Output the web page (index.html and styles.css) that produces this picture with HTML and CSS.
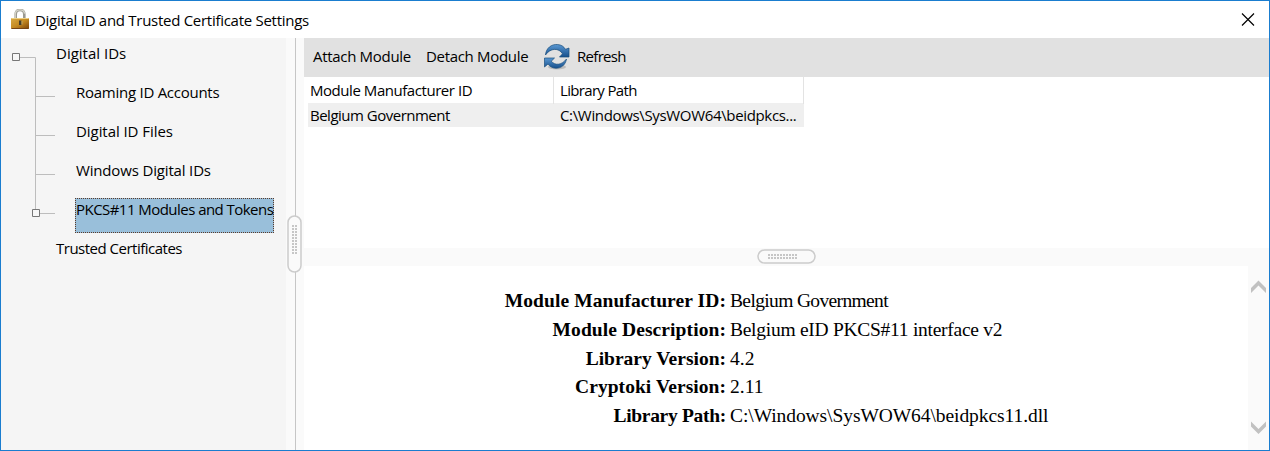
FILE: index.html
```html
<!DOCTYPE html>
<html lang="en">
<head>
<meta charset="utf-8">
<title>Digital ID and Trusted Certificate Settings</title>
<link rel="stylesheet" href="styles.css">
</head>
<body>
<div class="window">
  <header class="titlebar">
    <svg class="lock" width="20" height="22" viewBox="0 0 20 22">
      <defs>
        <linearGradient id="brass" x1="0" y1="0" x2="1" y2="1"><stop offset="0" stop-color="#d9aa45"/><stop offset=".5" stop-color="#c58a22"/><stop offset="1" stop-color="#794008"/></linearGradient>
      </defs>
      <path d="M5.7 10V5.500C5.700 2.300 7 1 10 1s4.300 1.300 4.300 4.500V10" fill="none" stroke="#9b9a91" stroke-width="2.600"/>
      <path d="M5.200 10V5.500C5.200 2.300 7 .9 10 .9s4.300 1.300 4.600 3.800" fill="none" stroke="#d5d4c9" stroke-width="1.300"/>
      <rect x="1" y="9" width="18" height="11" rx="1" fill="url(#brass)"/>
      <path d="M1.500 9.500h17" stroke="#edcf82"/>
      <path d="M1.500 19.500h17" stroke="#754314"/>
      <path d="M9 11.500h2.500v4.500H9z" fill="#443d2c"/>
      <path d="M12 12v3.500" stroke="#b9a365"/>
    </svg>
    <h1 class="title">Digital ID and Trusted Certificate Settings</h1>
    <svg class="close" width="14" height="14" viewBox="0 0 14 14"><path d="M1 .5l12 12M13 .5L1 12.500" stroke="#000" stroke-width="1.150" fill="none"/></svg>
  </header>
  <div class="body">
    <nav class="tree">
      <svg class="branches" width="60" height="190" viewBox="0 0 60 190">
        <path d="M19 19.500H34.500V172M34 58.500H54M34 97.500H54M34 136.500H54M38 175.500H54" fill="none" stroke="#bdbdbd"/>
        <path d="M11.500 15.500h7v7h-7zM31.500 171.500h7v7h-7z" fill="#f7f7f7" stroke="#777"/>
      </svg>
      <div class="node"><span class="t1">Digital IDs</span></div>
      <div class="node child"><span class="t2">Roaming ID Accounts</span></div>
      <div class="node child"><span class="t3">Digital ID Files</span></div>
      <div class="node child"><span class="t4">Windows Digital IDs</span></div>
      <div class="node child selected"><span class="t5">PKCS#11 Modules and Tokens</span></div>
      <div class="node"><span class="t6">Trusted Certificates</span></div>
    </nav>
    <div class="splitter">
      <svg class="grip-v" width="15" height="58" viewBox="0 0 15 58"><rect x="1" y="1" width="13" height="56" rx="6.500" fill="#fafafa" stroke="#ccc" stroke-width="1.500"/><path d="M6 10v30M9 10v30" stroke="#c6c6c6" stroke-width="2" stroke-dasharray="2 1"/></svg>
    </div>
    <main class="content">
      <div class="toolbar">
        <span class="b1">Attach Module</span>
        <span class="b2">Detach Module</span>
        <svg class="refresh" width="28" height="28" viewBox="0 0 28 28">
          <defs><linearGradient id="blue" x1="0" y1="0" x2="0" y2="1"><stop offset="0" stop-color="#5a98d2"/><stop offset="1" stop-color="#164f8c"/></linearGradient></defs>
          <ellipse cx="14" cy="24" rx="9" ry="2.500" fill="#bcbcbc"/>
          <path d="M2.500 12C3 5 8.500 1 14.500 1.500c4 .3 6.500 2.300 8 4.800L26 5v9H16.500l3-3.200C16 4.500 7 5 2.500 12z" fill="url(#blue)" stroke="#184d7c" stroke-width=".7"/>
          <path d="M23.500 16c-1 6-5.500 9.500-11 9.200-3.500-.2-6-2-7.500-4.200L1.500 24v-9h10l-3.200 3.200C12 23 19 22 23.500 16z" fill="url(#blue)" stroke="#184d7c" stroke-width=".7"/>
        </svg>
        <span class="b3">Refresh</span>
      </div>
      <section class="modules">
        <div class="grid head"><div class="cell"><span class="g1">Module Manufacturer ID</span></div><div class="cell"><span class="g2">Library Path</span></div></div>
        <div class="grid row"><div class="cell"><span class="g3">Belgium Government</span></div><div class="cell"><span class="g4">C:\Windows\SysWOW64\beidpkcs...</span></div></div>
      </section>
      <div class="divider">
        <svg class="grip-h" width="59" height="15" viewBox="0 0 59 15"><rect x="1" y="1" width="57" height="13" rx="6.500" fill="#fafafa" stroke="#ccc" stroke-width="1.500"/><path d="M11 6h30M11 9h30" stroke="#c6c6c6" stroke-width="2" stroke-dasharray="2 1"/></svg>
      </div>
      <section class="lower">
        <dl class="details">
          <dt class="d1">Module Manufacturer ID:</dt><dd class="v1">Belgium Government</dd>
          <dt class="d2">Module Description:</dt><dd class="v2">Belgium eID PKCS#11 interface v2</dd>
          <dt class="d3">Library Version:</dt><dd class="v3">4.2</dd>
          <dt class="d4">Cryptoki Version:</dt><dd class="v4">2.11</dd>
          <dt class="d5">Library Path:</dt><dd class="v5">C:\Windows\SysWOW64\beidpkcs11.dll</dd>
        </dl>
        <div class="scrollbar">
          <svg width="15" height="14" viewBox="0 0 15 14"><path d="M0 8L7.500 .5 15 8v5L7.500 5.500 0 13z" fill="#c1c1c1"/></svg>
          <svg width="15" height="14" viewBox="0 0 15 14"><path d="M0 5.500L7.500 13 15 5.500V.5L7.500 8 0 .5z" fill="#c1c1c1"/></svg>
        </div>
      </section>
    </main>
  </div>
</div>
</body>
</html>
```
FILE: styles.css
```css
* { box-sizing: border-box; }
body { margin: 0; background: #fff; color: #000; font: 15px/24px "Open Sans", "Noto Sans", sans-serif; white-space: nowrap; overflow: hidden; }
svg { display: block; flex: none; }
.window { width: 1270px; height: 451px; border: 1px solid #1a7dcf; background: #fff; display: flex; flex-direction: column; }
.titlebar { height: 37px; flex: none; display: flex; align-items: center; padding: 0 14px 0 9px; }
.title { margin: 0 auto 0 5px; font-size: inherit; font-weight: inherit; letter-spacing: -.28px; }
.body { display: flex; flex: 1; min-height: 0; }
.tree { position: relative; width: 285px; background: #f5f5f5; padding: 3px 0 0 55px; display: flex; flex-direction: column; align-items: flex-start; gap: 4px; }
.branches { position: absolute; left: 0; top: 0; }
.node { height: 35px; }
.child { margin-left: 20px; }
.selected { width: 199px; margin: 1px 0 -1px 19px; background: #99bfda; border: 1px dotted #5c3b2a; line-height: 20px; }
.t2 { letter-spacing: -.26px; }
.t3 { letter-spacing: -.06px; }
.t4 { letter-spacing: -.16px; }
.t5 { letter-spacing: -.54px; }
.t6 { letter-spacing: -.5px; }
.splitter { position: relative; width: 18px; background: linear-gradient(90deg, #fafafa 9px, #c6c6c6 9px 10px, #fafafa 10px); }
.grip-v { position: absolute; left: 1px; top: 177px; }
.content { flex: 1; display: flex; flex-direction: column; min-width: 0; }
.toolbar { height: 39px; flex: none; background: #e1e1e1; display: flex; align-items: center; padding: 0 0 4px 9px; }
.refresh { margin-top: 3px; }
.b1 { width: 113px; letter-spacing: -.31px; }
.b2 { width: 117px; letter-spacing: -.31px; }
.b3 { margin-left: 6px; letter-spacing: -.7px; }
.modules { height: 171px; flex: none; }
.grid { display: grid; grid-template-columns: 246px 250px; width: 496px; margin-left: 4px; }
.cell { padding-left: 2px; }
.cell + .cell { padding-left: 6px; }
.head { height: 26px; line-height: 27px; }
.head .cell { border-right: 1px solid #e3e3e3; }
.row { height: 24px; background: #efefef; line-height: 25px; }
.g1 { letter-spacing: -.45px; }
.g2 { letter-spacing: -.67px; }
.g3 { letter-spacing: -.5px; }
.g4 { letter-spacing: -.34px; }
.divider { height: 18px; flex: none; background: #fafafa; padding: 1px 0 0 453px; }
.lower { flex: 1; display: flex; min-height: 0; }
.details { flex: 1; margin: 0; padding: 21px 0 0; display: grid; grid-template-columns: 422px auto; grid-auto-rows: 28.8px; align-content: start; column-gap: 4px; font: 19.500px/28.800px "Liberation Serif", serif; }
.details dt { font-weight: bold; text-align: right; }
.details dd { margin: 0; }
.d1, .d2 { letter-spacing: .09px; }
.d4 { letter-spacing: .05px; }
.d5 { letter-spacing: -.3px; }
.v1 { letter-spacing: -.64px; }
.v2 { letter-spacing: -.27px; }
.v5 { letter-spacing: -.07px; }
.scrollbar { width: 21px; background: #fafafa; display: flex; flex-direction: column; justify-content: space-between; padding: 14px 0 15px 3px; }
```
